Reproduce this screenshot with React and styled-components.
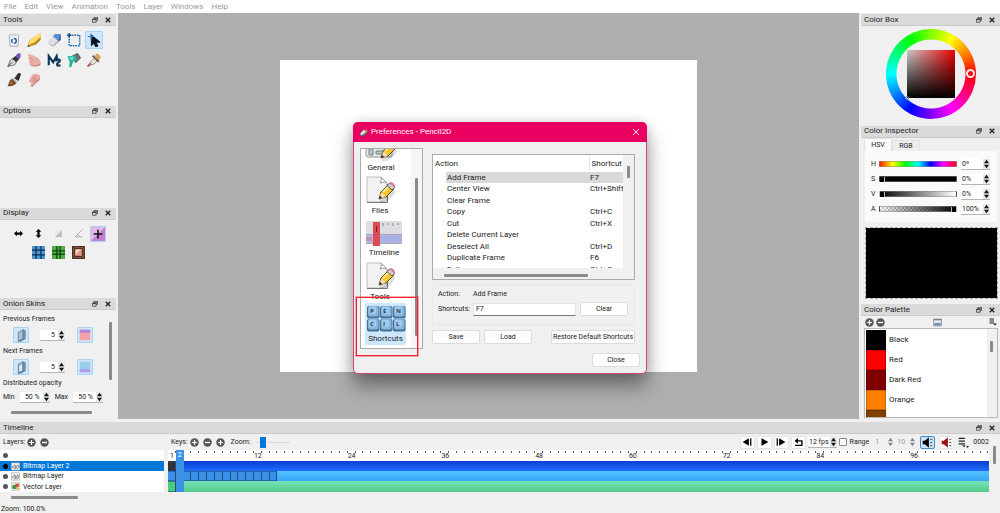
import React, { useState } from "react";
import styled, { createGlobalStyle, css } from "styled-components";

const GlobalStyle = createGlobalStyle`
  * { box-sizing: border-box; }
  body {
    margin: 0;
    background: #f0f0f0;
    color: #222;
    font: 7px/10px Roboto, "Noto Sans", sans-serif;
  }
  button, input {
    font: inherit;
    color: inherit;
    margin: 0;
    padding: 0;
    border: 0;
    background: none;
    min-width: 0;
  }
  svg { display: block; flex: none; }
  ul { list-style: none; margin: 0; padding: 0; }
`;

/* ---------- window ---------- */

const Window = styled.div`
  display: grid;
  grid-template-rows: 13px 1fr auto auto;
  min-height: 100vh;
`;

const MenuBar = styled.nav`
  display: flex;
  align-items: center;
  gap: 8px;
  padding: 0 4px;
  background: #fff;
  color: #999;
  font-size: 8px;
`;

const Main = styled.main`
  display: grid;
  grid-template-columns: 118px minmax(0, 1fr) 141px;
  padding-bottom: 3px;
`;

const Column = styled.div`
  display: grid;
  grid-template-rows: ${p => p.$rows};
  padding: ${p => (p.$right ? "1px 0 0 2px" : "1px 2px 0 0")};
`;

const Canvas = styled.div`
  display: flex;
  align-items: center;
  padding: 0 162px;
  background: #afafaf;
`;

const Sheet = styled.div`
  width: 100%;
  aspect-ratio: 4 / 3;
  background: #fff;
`;

const Status = styled.footer`
  padding-left: 1px;
  height: 9px;
  line-height: 10px;
`;

/* ---------- docks ---------- */

const DockBox = styled.section`
  display: flex;
  flex-direction: column;
  min-height: 0;
  min-width: 0;
`;

const DockHead = styled.header`
  display: flex;
  align-items: center;
  flex: none;
  height: 12px;
  padding: 0 4px 0 3px;
  background: #dadada;
  border-bottom: 1px solid #cbcbcb;
`;

const DockTitle = styled.h2`
  flex: 1;
  margin: 0;
  font-size: 8px;
  font-weight: 400;
  line-height: 12px;
`;

const DockButton = styled.button`
  display: grid;
  place-items: center;
  width: 8px;
  height: 8px;
  margin-left: 5px;
`;

const IconGrid = styled.div`
  display: grid;
  grid-template-columns: repeat(5, 18px);
  grid-auto-rows: 18px;
  gap: 2px;
  padding: 5px 0 0 5px;
`;

const DisplayRow = styled.div`
  display: flex;
  justify-content: center;
  gap: 4px;
  padding-top: ${p => (p.$first ? "6px" : "3px")};
`;

const IconButton = styled.button`
  display: grid;
  place-items: center;
  width: ${p => p.$size || 18}px;
  height: ${p => p.$size || 18}px;
  border-radius: 1px;
  ${p =>
    p.$on &&
    css`
      background: #cce6fb;
      border: 1px solid #a9d3f5;
    `}
`;

const Bar = styled.div`
  flex: none;
  background: #8a8a8a;
  border-radius: 1px;
  width: ${p => p.$w || 3}px;
  height: ${p => p.$h || 3}px;
  margin: ${p => p.$m || 0};
`;

const OnionBody = styled.div`
  display: grid;
  grid-template-columns: 1fr 6px;
`;

const OnionForm = styled.div`
  padding: 4px 0 0 3px;
`;

const OnionLine = styled.div`
  display: flex;
  align-items: center;
  height: 22px;
  padding-left: 10px;
`;

const OnionSpin = styled.div`
  margin: 0 12px 0 11px;
`;

const OpacityLine = styled.div`
  display: flex;
  align-items: center;
  justify-content: space-between;
  height: 18px;
  padding-right: 7px;
`;

const SpinBox = styled.span`
  display: inline-flex;
  align-items: center;
  width: ${p => p.$w}px;
  height: 11px;
  background: ${p => (p.$flat ? "transparent" : "#fff")};
  border-bottom: 1px solid ${p => (p.$flat ? "transparent" : "#b5b5b5")};
  color: ${p => (p.$flat ? "#999" : "#222")};
  input {
    flex: 1;
    width: 0;
    height: 10px;
    padding: 0 ${p => p.$pad || 1}px;
    text-align: ${p => p.$align || "right"};
  }
`;

const Steppers = styled.span`
  display: grid;
  width: 7px;
  height: 10px;
  background: ${p => (p.$flat ? "transparent" : "#e6e6e6")};
  button {
    display: grid;
    place-items: center;
    width: 7px;
    height: 5px;
  }
`;

/* ---------- color docks ---------- */

const Wheel = styled.div`
  display: grid;
  place-items: center;
  position: relative;
  width: 90px;
  height: 90px;
  margin: 3px auto 0;
  border-radius: 50%;
  background: radial-gradient(circle, #f0f0f0 34px, transparent 35px),
    conic-gradient(from 90deg, #f00, #f0f, #00f, #0ff, #0f0, #ff0, #f00);
`;

const Shade = styled.div`
  width: 48px;
  height: 48px;
  background: linear-gradient(to top, #000, transparent),
    linear-gradient(to right, #ccc, #e00);
`;

const HueMark = styled.i`
  position: absolute;
  right: 1px;
  top: 40px;
  width: 9px;
  height: 9px;
  border: 2px solid #ffe8ee;
  border-radius: 50%;
`;

const ShadeMark = styled.i`
  position: absolute;
  left: 19px;
  top: 67px;
  width: 4px;
  height: 4px;
  border: 1px solid #789;
  border-radius: 50%;
`;

const Tabs = styled.div`
  display: flex;
  align-items: flex-end;
  height: 13px;
  padding-left: 3px;
`;

const Tab = styled.button`
  width: 28px;
  height: ${p => (p.$on ? 13 : 11)}px;
  background: ${p => (p.$on ? "#fafafa" : "#eee")};
  border: 1px solid #e2e2e2;
  border-bottom: 0;
`;

const TabPage = styled.div`
  display: grid;
  align-content: start;
  gap: 4px;
  margin: 0 3px 0 4px;
  padding: 8px 7px 0 6px;
  height: 71px;
  background: #fafafa;
`;

const Channel = styled.div`
  display: grid;
  grid-template-columns: 8px minmax(0, 1fr) 29px;
  align-items: center;
  height: 11px;
`;

const ChannelSlider = styled.input`
  appearance: none;
  width: calc(100% - 4px);
  height: 6px;
  border: 1px solid #8888;
  border-radius: 1px;
  background: ${p => p.$bg};
  &::-webkit-slider-thumb {
    appearance: none;
    width: 5px;
    height: 5px;
    background: ${p => (p.$bare ? "transparent" : "#000")};
    border: solid ${p => (p.$bare ? "transparent" : "#bbb")};
    border-width: ${p => (p.$end ? "0 0 0 1px" : "0 1px 0 0")};
  }
`;

const Preview = styled.div`
  height: 72px;
  margin: 5px 2px 0 4px;
  background: #000 padding-box;
  border: 1px dashed #aaa;
`;

const PaletteBar = styled.div`
  display: flex;
  align-items: center;
  justify-content: space-between;
  height: 12px;
  padding: 0 3px 0 4px;
`;

const Pair = styled.span`
  display: flex;
  gap: 2px;
`;

const PaletteList = styled.div`
  display: grid;
  grid-template-columns: 1fr 10px;
  height: 90px;
  margin: 0 2px 0 3px;
  overflow: hidden;
  background: #fff;
  border: 1px solid #b9b9b9;
  ul { padding: 1px; }
`;

const Swatch = styled.button`
  display: flex;
  align-items: center;
  gap: 3px;
  height: 20px;
  font-size: 8px;
  &::before {
    content: "";
    width: 18px;
    height: 18px;
    background: ${p => p.$color};
    border: 1px solid #0003;
  }
`;

const PaletteGutter = styled.div`
  background: #f0f0f0;
`;

/* ---------- timeline ---------- */

const TimelineBody = styled.div`
  display: grid;
  grid-template-columns: 168px minmax(0, 1fr) 11px;
  height: 70px;
`;

const ToolRow = styled.div`
  display: flex;
  align-items: center;
  height: 16px;
  padding-left: 3px;
  gap: 4px;
`;

const ToolGroup = styled.div`
  display: flex;
  align-items: center;
  gap: ${p => p.$gap || 2}px;
`;

const Spacer = styled.span`
  flex: 1;
`;

const ZoomLabel = styled.label`
  margin-left: 2px;
`;

const ZoomSlider = styled.input`
  appearance: none;
  width: 33px;
  height: 12px;
  margin-left: 2px;
  background: linear-gradient(#d8d8d8, #d8d8d8) center / 100% 1px no-repeat;
  &::-webkit-slider-thumb {
    appearance: none;
    width: 6px;
    height: 11px;
    background: #0078d7;
  }
`;

const PlayButton = styled.button`
  display: grid;
  place-items: center;
  width: 15px;
  height: 13px;
  background: ${p => (p.$on ? "#cce4f7" : "#fdfdfd")};
  border: 1px solid ${p => (p.$on ? "#3c8ac9" : "#e4e4e4")};
  border-radius: 2px;
`;

const RangeLabel = styled.label`
  display: flex;
  align-items: center;
  gap: 3px;
  margin-right: 1px;
  input {
    appearance: none;
    width: 8px;
    height: 8px;
    background: #fafafa;
    border: 1px solid #888;
    border-radius: 1px;
  }
`;

const LayerList = styled.ul`
  width: 164px;
  background: #fff;
`;

const Layer = styled.li`
  display: flex;
  align-items: center;
  gap: 3px;
  height: ${p => (p.$tall ? 11 : 10)}px;
  padding-left: 3px;
  background: ${p => (p.$on ? "#0078d7" : "#fff")};
  color: ${p => (p.$on ? "#fff" : "#222")};
`;

const Eye = styled.button`
  width: 5px;
  height: 5px;
  border-radius: 50%;
  background: ${p => (p.$on ? "#000" : "#555")};
`;

const Frames = styled.div`
  position: relative;
  background: #fff;
`;

const Ruler = styled.div`
  display: flex;
  height: 11px;
  padding-top: 1px;
`;

const Tick = styled.span`
  display: flex;
  justify-content: ${p => (p.$edge ? "center" : "flex-end")};
  flex: 1 1 0;
  width: 0;
  line-height: 10px;
  background: linear-gradient(#555, #555) right top / 1px 2px no-repeat;
`;

const Track = styled.div`
  display: flex;
  height: ${p => (p.$tall ? 11 : 10)}px;
  background: linear-gradient(${p => p.$from}, ${p => p.$to});
`;

const Key = styled.i`
  flex: 1 1 0;
  ${p =>
    p.$fill &&
    css`
      background: ${p.$fill};
      box-shadow: inset -1px 0 #1d4f80, inset 0 1px #1d4f8099, inset 0 -1px #1d4f8099;
    `}
`;

const Playhead = styled.div`
  position: absolute;
  left: calc(100% / 105);
  top: 0;
  width: calc(100% / 105);
  height: 42px;
  background: #3f92e3;
  color: #fff;
  line-height: 11px;
  text-align: center;
`;

/* ---------- preferences dialog ---------- */

const Overlay = styled.div`
  position: absolute;
  inset: 0;
  display: grid;
  place-items: center;
  padding-bottom: 17px;
  pointer-events: none;
`;

const Dialog = styled.div`
  position: relative;
  width: 294px;
  background: #f0f0f0;
  border: 1px solid #d0437f;
  border-radius: 5px;
  box-shadow: 0 12px 20px #0006, 0 0 12px #0002;
  pointer-events: auto;
`;

const TitleBar = styled.header`
  display: flex;
  align-items: center;
  gap: 3px;
  height: 20px;
  margin: -1px -1px 0;
  padding: 0 7px 0 6px;
  background: #ea0061;
  border-radius: 5px 5px 0 0;
  color: #fff;
  font-size: 8px;
`;

const DialogBody = styled.div`
  display: grid;
  grid-template-columns: 63px minmax(0, 1fr);
  gap: 9px;
  padding: 6px 11px 0 6px;
`;

const Pages = styled.div`
  display: flex;
  height: 201px;
  overflow: hidden;
  background: #fff;
  border: 1px solid #aaa;
  ul { width: 50px; }
`;

const Page = styled.li`
  button {
    display: grid;
    justify-items: center;
    justify-content: center;
    align-content: end;
    width: ${p => p.$w}px;
    height: ${p => p.$h}px;
    margin-left: 4px;
    font-size: 8px;
    line-height: 12px;
    background: ${p => (p.$on ? "#cce8ff" : "none")};
  }
`;

const Gutter = styled.div`
  flex: 1;
  background: #f5f5f5;
  padding: 29px 0 0 4px;
`;

const Highlight = styled.div`
  position: absolute;
  left: 2px;
  top: 174px;
  width: 62px;
  height: 59px;
  border: 1px solid #f0222c;
  outline: 1px solid #f0222c60;
`;

const Panel = styled.div`
  padding-top: 6px;
`;

const TreeBox = styled.div`
  display: grid;
  grid-template-columns: minmax(0, 1fr) 11px;
  height: 126px;
  border: 1px solid #aaa;
`;

const TreeClip = styled.div`
  height: 113px;
  overflow: hidden;
  background: #fff;
`;

const Tree = styled.table`
  table-layout: fixed;
  width: 100%;
  border-collapse: collapse;
  font-size: 8px;
  line-height: 11px;
  th, td {
    padding: 0;
    font-weight: 400;
    text-align: left;
    white-space: nowrap;
    overflow: hidden;
  }
  th { height: 16px; padding: 1px 0 0 2px; }
  th:last-child { width: 34px; border-left: 1px solid #e5e5e5; }
  td { height: 11px; }
  tr:nth-child(odd) td { height: 12px; }
  td:first-child { padding-left: 13px; }
`;

const Cell = styled.span`
  display: block;
  padding-left: 1px;
  background: ${p => (p.$on ? "#d9d9d9" : "none")};
`;

const Group = styled.div`
  display: grid;
  grid-template-columns: 35px 1fr 48px;
  grid-template-rows: 12px 14px;
  row-gap: 2px;
  align-items: center;
  height: 41px;
  margin-top: 4px;
  padding: 3px 6px 0 5px;
  border: 1px solid #e8e8e8;
`;

const ShortcutInput = styled.input`
  width: 103px;
  height: 13px;
  padding: 0 2px;
  background: #fff;
  border: 1px solid #e4e4e4;
  border-bottom-color: #777;
`;

const PushButton = styled.button`
  width: ${p => p.$w || 48}px;
  height: 14px;
  background: #fdfdfd;
  border: 1px solid #dcdcdc;
  border-radius: 2px;
  white-space: nowrap;
`;

const Buttons = styled.div`
  display: flex;
  gap: 4px;
  padding-top: 5px;
  button:last-child { margin-left: auto; }
`;

const DialogFoot = styled.footer`
  display: flex;
  justify-content: flex-end;
  padding: 4px 6px 6px;
`;

/* ---------- drawings ---------- */

const Svg = ({ s = 14, v = 16, children }) => (
  <svg width={s} height={s} viewBox={`0 0 ${v} ${v}`} fill="none" aria-hidden="true">
    {children}
  </svg>
);

const toolIcons = [
  ["Clear Frame", <>
    <path d="M2.500 2h11l-1 13h-9z" fill="#f1f4f8" stroke="#9aa2ac" />
    <path d="M2 1.500h12v2H2z" fill="#d3d9e0" />
    <circle cx="8" cy="9" r="2.600" stroke="#3a62a6" strokeWidth="1.800" strokeDasharray="4 1.400" />
  </>],
  ["Pencil", <>
    <path d="M15.500 0v8L10 13l-9 3-.5-1.500L3 8z" fill="#e9b233" />
    <path d="M15.500 0L4 8l-2 5 7-3 6.500-6z" fill="#ffdc6b" />
    <path d="M15.500 5v3L10 13l-7 2.500 1-2L9 11z" fill="#b9811f" />
    <path d="M.5 16l1-2.500 2 1.500z" fill="#4a3414" />
  </>],
  ["Eraser", <>
    <path d="M1 11L9 1h6.500v7L8 15H5z" fill="#a9aeb6" />
    <path d="M1 11l6-7.500 6 4.500-6.500 6.500z" fill="#dcdee2" />
    <path d="M9 1h6.500v6L13 9 7 4z" fill="#5b8fd6" />
    <path d="M15.500 1v7L13 10V8z" fill="#345f9f" />
  </>],
  ["Select", <>
    <rect x="2.500" y="2.500" width="12" height="12" stroke="#2470ae" strokeWidth="1.700" strokeDasharray="2 1" />
    <path d="M0 2.500h5M2.500 0v5" stroke="#174f82" strokeWidth="1.700" />
  </>],
  ["Move", <>
    <path d="M5 2v12.500l3-2.800 2 4.300 2.500-1-2-4.500H15z" fill="#08121f" stroke="#08121f" />
    <path d="M1 4h7M4.500 .5v7" stroke="#3b86c7" strokeWidth="1.400" />
  </>],
  ["Pen", <>
    <path d="M1 15.500l2.500-7L7 6l4 4-2 3.500z" fill="#d5d8dd" stroke="#666b74" />
    <path d="M1 15.500l5-5" stroke="#333" />
    <path d="M6 6.500L10 3l4 4-3.500 3.500z" fill="#33343a" />
    <path d="M10 3.500L12 .5h3.500V5L13 7z" fill="#7450b4" />
  </>],
  ["Hand", <>
    <path d="M.5 1.500C4 1 9 3.500 13 6c3 2.500 3 5 2 8-4 2-9 2-12-1l-1-3 1.500-1L1 6l2-.5z" fill="#e8ada4" />
    <path d="M2 5l5 3M3 9l4 2" stroke="#d0968e" />
    <path d="M3 13c3 3 8 3 12 1l.5-3c-3 3-8 4-12.500 2z" fill="#cf8f86" />
  </>],
  ["Polyline", <path d="M2 14V3.500l5 7 4-7 .5 4M9.500 9c3-2 6-2 5 .5-1 1.500-3 1.500-3 3.500s2 1.500 4 1" stroke="#0d3554" strokeWidth="2.400" />],
  ["Paint Bucket", <>
    <path d="M6 3.500L12 .5l3.500 5L10 11z" fill="#6d7277" stroke="#44484c" />
    <path d="M.5 4l9-1.500 1.500 6-4 1.500L5 16H2.500L3 10z" fill="#1cb59e" />
    <path d="M2 5l6-1-2 5z" fill="#6fe0cd" />
  </>],
  ["Eyedropper", <>
    <path d="M1.500 14.500L4 10l5-5 3.500 3.500-5 4.500z" fill="#e8dcd7" stroke="#a08c86" />
    <path d="M.5 15.500l4-3.500" stroke="#c05a5a" strokeWidth="2.200" />
    <path d="M6.500 3l7 7" stroke="#6d5442" strokeWidth="2.200" />
    <path d="M9 5l1-4 2.500-.5 3.500 4L13.500 8z" fill="#dba468" />
  </>],
  ["Brush", <>
    <path d="M9 6l4-5.500L15.500 1 13 8.500z" fill="#2a2a2a" stroke="#2a2a2a" />
    <path d="M7 5l5.500 5-2 2L5 7z" fill="#c2c2c2" />
    <path d="M5.500 6.500l5 5C9 15 4 15 .5 15.500 2.500 13 1.500 9 5.500 6.500z" fill="#7a4522" />
    <path d="M5 9l2 3-4 1.500" fill="#b67a42" />
  </>],
  ["Smudge", <>
    <path d="M6 2c4-2 8-1 9 2 1 4-3 6-5.500 8L6 16l-2.500-1L5 11l-3-1 1-3z" fill="#e8aba3" />
    <path d="M6 6.500l4-2.500M6 9l5-3M8 10.500l4-3" stroke="#c47f78" />
    <path d="M15 5c0 4-3 5-5.500 7L6 16l-1-.5 4-5z" fill="#cf8d85" />
  </>],
];

const displayIcons = [
  ["Mirror horizontally", <path d="M0 8l5-5v3h6V3l5 5-5 5v-3H5v3z" fill="#000" />],
  ["Mirror vertically", <path d="M8 0l5 5h-3v6h3l-5 5-5-5h3V5H3z" fill="#000" />],
  ["Thin lines", <><path d="M2 14V2h12z" fill="#e6e6e6" /><path d="M2 14L14 2v12z" fill="#bdbdbd" /></>],
  ["Outlines", <path d="M15 1L2 14h13M5 8l6 6" stroke="#a0a0a0" strokeWidth="1.500" />],
  ["Center", <><path d="M0 0h16L0 16z" fill="#e5b6e9" /><path d="M16 0v16H0z" fill="#c77dd0" /><path d="M3 8h10M8 3v10" stroke="#111" strokeWidth="1.800" /></>],
  ["Thirds", <><path d="M0 0h16v16H0z" fill="#4d98cf" /><path d="M0 5h16M0 11h16M5 0v16M11 0v16" stroke="#0b2c57" strokeWidth="1.500" /></>],
  ["Golden ratio", <><path d="M0 0h16v16H0z" fill="#4faf43" /><path d="M0 6h16M0 10h16M6 0v16M10 0v16" stroke="#0c4212" strokeWidth="1.500" /></>],
  ["Safe areas", <><path d="M0 0h16v16H0z" fill="#9a6650" /><path d="M1 1h14v14H1zM3.500 3.500h9v9h-9z" stroke="#3a1c12" strokeWidth="1.300" /><path d="M4 4h8L4 12z" fill="#f6d2bf" /><path d="M12 4v8H4z" fill="#e09a7c" /></>],
];

const Plus = () => <Svg s={9}><circle cx="8" cy="8" r="7.500" fill="#555" /><path d="M3.500 8h9M8 3.500v9" stroke="#fff" strokeWidth="2.200" /></Svg>;
const Minus = () => <Svg s={9}><circle cx="8" cy="8" r="7.500" fill="#555" /><path d="M3.500 8h9" stroke="#fff" strokeWidth="2.500" /></Svg>;

const FloatIcon = () => <Svg s={6} v={8}><path d="M2.500 3V1h5v3.500H6M.5 3h5v4h-5z" stroke="#333" /><path d="M0 3.500h6M2 1.500h6" stroke="#333" /></Svg>;
const CloseIcon = ({ color = "#222", w = 1.8, s = 6 }) => <Svg s={s} v={8}><path d="M1 1l6 6M7 1L1 7" stroke={color} strokeWidth={w} /></Svg>;

const Cube = ({ flip }) => (
  <Svg s={13}>
    <path d="M4 4l6-3v11l-6 3z" fill="#a9bfd1" stroke="#5d7a92" />
    <path d="M10 1l2.500 1v10L7 15l-3 0 6-3z" fill="#7892a8" stroke="#5d7a92" />
    {flip && <path d="M5.500 6L8.500 4.500v7l-3 1.500z" fill="#e4eef6" />}
  </Svg>
);

// fat little pencil lying over the page icons
const PencilOverlay = () => (
  <>
    <path d="M15 26c5 1 12-5 14-10" stroke="#0002" strokeWidth="3" />
    <path d="M14 24l2-7 8-8 5 5-8 8z" fill="#f5c52f" stroke="#5c451a" />
    <path d="M18 17l7-7" stroke="#ffe994" strokeWidth="2" />
    <path d="M22 10.500l2.500-2.500c3 0 5 2 5 5L27 15z" fill="#c9ccd2" stroke="#6b5c56" />
    <path d="M24.500 8c1-1.500 6-.5 5 4.500z" fill="#dc7886" />
    <path d="M14 24l2-6c2 0 4 2 4.500 4z" fill="#f3d9ae" />
    <path d="M14 24l1-3 2 2z" fill="#111" />
  </>
);

const PaperIcon = () => (
  <Svg s={30} v={30}>
    <path d="M2 2h14l6 6v19H2z" fill="#f2f2f2" stroke="#bdbdbd" />
    <path d="M16 2c1 2 0 4-1 6 3-1 5-1 7 0z" fill="#fff" stroke="#999" />
    <path d="M2 27.500h20.500V9" stroke="#777" />
    <PencilOverlay />
  </Svg>
);

const GeneralIcon = () => (
  <Svg s={32} v={32}>
    <rect x="1" y="14" width="26" height="13" rx="2" fill="#e8eae9" stroke="#8f9694" />
    <path d="M4 19h4v6H4zM11 21h8v3h-8z" fill="#b9c9c4" stroke="#74827e" />
    <g transform="translate(2 4)"><PencilOverlay /></g>
  </Svg>
);

const TimelineIcon = () => (
  <svg width="36" height="26" viewBox="0 0 36 26" fill="none" aria-hidden="true">
    <path d="M0 0h36v13H0z" fill="#dedee2" />
    <path d="M0 13h36v10H0z" fill="#b9b4df" />
    <path d="M0 13.500h36M0 22.500h36" stroke="#a5a5b8" />
    <path d="M17 2v3M22 2v2M27 2v3M32 2v2" stroke="#888" />
    <path d="M0 16h6v4H0z" fill="#c98fb4" />
    <path d="M7 1h7v24H7z" fill="#d94b55" />
    <path d="M10.500 5v6" stroke="#7c1820" />
    <path d="M14 15h22v6H14z" fill="#a9b0e6" />
  </svg>
);

const KeyLabel = styled.text`
  font: 700 6px "Open Sans", sans-serif;
  fill: #173c5f;
`;

const KeysIcon = () => (
  <svg width="40" height="27" viewBox="0 0 40 27" aria-hidden="true">
    {["P", "E", "N", "C", "I", "L"].map((k, i) => (
      <g key={k} transform={`translate(${(i % 3) * 13 + 1} ${i < 3 ? 0 : 13})`}>
        <rect width="12.500" height="12.500" rx="2" fill="#466f96" />
        <rect x="1" width="10.500" height="10.500" rx="2" fill="#86b7de" />
        <rect x="2" y="1" width="7" height="7" rx="1" fill="#a3cbe9" />
        <KeyLabel x="3" y="7">{k}</KeyLabel>
      </g>
    ))}
  </svg>
);

const LayerIcon = ({ vector }) => (
  <Svg s={9}>
    <path d="M.5 1.500h15v13H.5z" fill="#f4f4f4" stroke="#999" />
    {vector ? (
      <><circle cx="6" cy="9" r="4" fill="#3c9a3b" /><path d="M8 3h6v6H8z" fill="#d34b2f" /><path d="M9 9l4 4" stroke="#e0b52d" strokeWidth="3" /></>
    ) : (
      <path d="M3 11c0-5 4-7 5-4s-4 4-1 5 3-8 6-6-1 6-3 6" stroke="#555" strokeWidth="1.500" />
    )}
  </Svg>
);

const Speaker = ({ color }) => (
  <Svg s={11}>
    <path d="M1 5.500h3l6-5v15l-6-5H1z" fill={color} />
    <path d="M12 4l3-1M12 8h3M12 12l3 1" stroke="#333" strokeWidth="1.300" />
  </Svg>
);

/* ---------- components ---------- */

function Dock({ title, children }) {
  return (
    <DockBox aria-label={title}>
      <DockHead>
        <DockTitle>{title}</DockTitle>
        <DockButton aria-label={"Float " + title}><FloatIcon /></DockButton>
        <DockButton aria-label={"Close " + title}><CloseIcon /></DockButton>
      </DockHead>
      {children}
    </DockBox>
  );
}

function Spin({ label, value, w, align, pad, flat }) {
  const [text, setText] = useState(value);
  const fill = flat ? "#888" : "#111";

  const step = by => {
    setText(String(text).replace(/\d+/, n => Number(n) + by));
  };

  return (
    <SpinBox $w={w} $align={align} $pad={pad} $flat={flat}>
      <input aria-label={label} value={text} onChange={e => setText(e.target.value)} />
      <Steppers $flat={flat}>
        <button aria-label={label + " up"} onClick={() => step(1)}>
          <Svg s={5} v={6}><path d="M0 5l3-4 3 4z" fill={fill} /></Svg>
        </button>
        <button aria-label={label + " down"} onClick={() => step(-1)}>
          <Svg s={5} v={6}><path d="M0 1l3 4 3-4z" fill={fill} /></Svg>
        </button>
      </Steppers>
    </SpinBox>
  );
}

function LeftDocks() {
  const [tool, setTool] = useState("Move");

  return (
    <Column $rows="92fr 102fr 91fr 121fr">
      <Dock title="Tools">
        <IconGrid>
          {toolIcons.map(([name, art]) => (
            <IconButton key={name} aria-label={name} $on={tool === name} onClick={() => setTool(name)}>
              <Svg>{art}</Svg>
            </IconButton>
          ))}
        </IconGrid>
      </Dock>
      <Dock title="Options" />
      <Dock title="Display">
        <DisplayRow $first>
          {displayIcons.slice(0, 5).map(([name, art]) => (
            <IconButton key={name} aria-label={name} $size={16} $on={name === "Center"}>
              <Svg s={name === "Center" ? 14 : 9}>{art}</Svg>
            </IconButton>
          ))}
        </DisplayRow>
        <DisplayRow>
          {displayIcons.slice(5).map(([name, art]) => (
            <IconButton key={name} aria-label={name} $size={16}>
              <Svg s={13}>{art}</Svg>
            </IconButton>
          ))}
        </DisplayRow>
      </Dock>
      <Dock title="Onion Skins">
        <OnionBody>
          <OnionForm>
            <div>Previous Frames</div>
            <OnionLine>
              <IconButton $size={16} $on aria-label="Show previous"><Cube /></IconButton>
              <OnionSpin><Spin label="Previous frames" value="5" w={25} pad={3} /></OnionSpin>
              <IconButton $size={16} $on aria-label="Previous color">
                <Svg s={12}><path d="M1 1h14v14H1z" fill="#f5a3a9" /><path d="M1 1h14v4H1z" fill="#b285dd" /></Svg>
              </IconButton>
            </OnionLine>
            <div>Next Frames</div>
            <OnionLine>
              <IconButton $size={16} $on aria-label="Show next"><Cube flip /></IconButton>
              <OnionSpin><Spin label="Next frames" value="5" w={25} pad={3} /></OnionSpin>
              <IconButton $size={16} $on aria-label="Next color">
                <Svg s={12}><path d="M1 1h14v14H1z" fill="#9bcdea" /><path d="M1 11h14v4H1z" fill="#b39af0" /></Svg>
              </IconButton>
            </OnionLine>
            <div>Distributed opacity</div>
            <OpacityLine>
              Min <Spin label="Min" value="50 %" w={30} pad={3} />
              Max <Spin label="Max" value="50 %" w={30} pad={3} />
            </OpacityLine>
          </OnionForm>
          <Bar $h={58} $m="12px 0 0 -1px" />
        </OnionBody>
        <Bar $w={81} $m="5px 0 0 11px" />
      </Dock>
    </Column>
  );
}

const channels = [
  ["H", "0º", 0, "linear-gradient(90deg,#f20,#ff0,#0f0,#0ff,#00f,#f0f,#f02)"],
  ["S", "0%", 0, "#000"],
  ["V", "0%", 0, "linear-gradient(90deg,#000,#fff)"],
  ["A", "100%", 100, "linear-gradient(90deg,transparent,#000), repeating-conic-gradient(#ccc 0 25%,#fff 0 50%) 0 0 / 4px 4px"],
];

const palette = [
  ["Black", "#000"],
  ["Red", "#f00"],
  ["Dark Red", "#800000"],
  ["Orange", "#ff8000"],
  ["Dark Orange", "#804000"],
];

function RightDocks() {
  return (
    <Column $right $rows="112fr 179fr 115fr">
      <Dock title="Color Box">
        <Wheel>
          <Shade />
          <HueMark />
          <ShadeMark />
        </Wheel>
      </Dock>
      <Dock title="Color Inspector">
        <Tabs role="tablist">
          <Tab role="tab" aria-selected="true" $on>HSV</Tab>
          <Tab role="tab" aria-selected="false">RGB</Tab>
        </Tabs>
        <TabPage>
          {channels.map(([name, value, pos, bg]) => (
            <Channel key={name}>
              <span>{name}</span>
              <ChannelSlider
                type="range"
                aria-label={name}
                defaultValue={pos}
                $bg={bg}
                $bare={name === "H"}
                $end={pos === 100}
              />
              <Spin label={name + " value"} value={value} w={29} align="left" />
            </Channel>
          ))}
        </TabPage>
        <Preview />
      </Dock>
      <Dock title="Color Palette">
        <PaletteBar>
          <Pair>
            <button aria-label="Add color"><Plus /></button>
            <button aria-label="Remove color"><Minus /></button>
          </Pair>
          <button aria-label="Native color dialog">
            <Svg s={9}><path d="M1 2h14v12H1z" fill="#dfe8f0" stroke="#666" /><path d="M2 9h12v4H2z" fill="#6c91b5" /><path d="M1 3h14" stroke="#777" strokeWidth="2" /></Svg>
          </button>
          <button aria-label="Palette menu">
            <Svg s={8}><path d="M1 2h9M1 6h9M1 10h9" stroke="#222" strokeWidth="2" /><path d="M8 11h8l-4 4z" fill="#222" /></Svg>
          </button>
        </PaletteBar>
        <PaletteList>
          <ul>
            {palette.map(([name, color]) => (
              <li key={name}><Swatch $color={color}>{name}</Swatch></li>
            ))}
          </ul>
          <PaletteGutter><Bar $h={11} $m="12px 0 0 3px" /></PaletteGutter>
        </PaletteList>
      </Dock>
    </Column>
  );
}

const FRAMES = Array.from({ length: 105 }, (_, i) => i + 1);

const tracks = [
  { from: "#0b3fd0", to: "#1e6cff", fill: "#333", keys: n => n === 1 },
  { from: "#53c4ff", to: "#38a4f4", fill: "#3a91e8", keys: n => n < 15 },
  { from: "#74e4b8", to: "#54cb88", fill: "#4ccb7d", keys: n => n === 1, tall: true },
];

function Timeline() {
  const [layer, setLayer] = useState("Bitmap Layer 2");

  return (
    <Dock title="Timeline">
      <TimelineBody>
        <div>
          <ToolRow>
            <ToolGroup>
              Layers:
              <ToolGroup $gap={4}>
                <button aria-label="Add layer"><Plus /></button>
                <button aria-label="Remove layer"><Minus /></button>
              </ToolGroup>
            </ToolGroup>
          </ToolRow>
          <LayerList>
            <Layer $tall><Eye aria-label="Toggle all layers" /></Layer>
            {["Bitmap Layer 2", "Bitmap Layer", "Vector Layer"].map((name, i) => (
              <Layer key={name} $on={name === layer} $tall={i === 2} onClick={() => setLayer(name)}>
                <Eye aria-label={"Toggle " + name} $on={name === layer} />
                <LayerIcon vector={i === 2} />
                <span>{name}</span>
              </Layer>
            ))}
          </LayerList>
          <Bar $w={67} $m="4px 0 0 11px" />
        </div>
        <div>
          <ToolRow>
            <ToolGroup>
              Keys:
              <ToolGroup $gap={4}>
                <button aria-label="Add frame"><Plus /></button>
                <button aria-label="Remove frame"><Minus /></button>
                <button aria-label="Duplicate frame"><Plus /></button>
              </ToolGroup>
            </ToolGroup>
            <ZoomLabel htmlFor="zoom">Zoom:</ZoomLabel>
            <ZoomSlider id="zoom" type="range" defaultValue={12} />
            <Spacer />
            <ToolGroup>
              <PlayButton aria-label="Previous frame"><Svg s={10}><path d="M11 2v12L1 8zM13 2h2v12h-2z" fill="#000" /></Svg></PlayButton>
              <PlayButton aria-label="Play"><Svg s={10}><path d="M4 2l11 6-11 6z" fill="#000" /></Svg></PlayButton>
              <PlayButton aria-label="Next frame"><Svg s={10}><path d="M5 2v12l10-6zM1 2h2v12H1z" fill="#000" /></Svg></PlayButton>
              <PlayButton aria-label="Loop"><Svg s={9}><path d="M2 13h12V5H5" stroke="#000" strokeWidth="2.400" /><path d="M7 0v10L1 5z" fill="#000" /></Svg></PlayButton>
              <Spin label="Frames per second" value="12 fps" w={29} />
              <RangeLabel><input type="checkbox" />Range</RangeLabel>
            </ToolGroup>
            <ToolGroup>
              <Spin label="Range start" value="1" w={20} align="left" flat />
              <Spin label="Range end" value="10" w={20} align="left" flat />
            </ToolGroup>
            <ToolGroup $gap={4}>
              <PlayButton $on aria-label="Sound"><Speaker color="#000" /></PlayButton>
              <PlayButton aria-label="Sound scrub"><Speaker color="#a01010" /></PlayButton>
            </ToolGroup>
            <button aria-label="Timeline options">
              <Svg s={11}><path d="M1 2h9M1 6h9M1 10h9" stroke="#222" strokeWidth="1.800" /><path d="M6 12h5l-2 3zM12 13h4l-2 3z" fill="#222" /></Svg>
            </button>
            <span>0002</span>
          </ToolRow>
          <Frames>
            <Ruler>
              {FRAMES.map(n => (
                <Tick key={n} $edge={n < 3}>{n === 1 || n % 12 === 0 ? n : ""}</Tick>
              ))}
            </Ruler>
            {tracks.map(t => (
              <Track key={t.from} $from={t.from} $to={t.to} $tall={t.tall}>
                {FRAMES.map(n => <Key key={n} $fill={t.keys(n) && t.fill} />)}
              </Track>
            ))}
            <Playhead>2</Playhead>
          </Frames>
        </div>
        <Bar $h={18} $m="12px 0 0 4px" />
      </TimelineBody>
    </Dock>
  );
}

const pages = [
  ["General", <GeneralIcon />, 25, 32],
  ["Files", <PaperIcon />, 43, 30],
  ["Timeline", <TimelineIcon />, 42, 38],
  ["Tools", <PaperIcon />, 44, 30],
  ["Shortcuts", <KeysIcon />, 42, 41],
];

const shortcuts = [
  ["Add Frame", "F7"],
  ["Center View", "Ctrl+Shift+H"],
  ["Clear Frame", ""],
  ["Copy", "Ctrl+C"],
  ["Cut", "Ctrl+X"],
  ["Delete Current Layer", ""],
  ["Deselect All", "Ctrl+D"],
  ["Duplicate Frame", "F6"],
  ["Exit", "Ctrl+Q"],
];

function Preferences() {
  const [keys, setKeys] = useState("F7");

  return (
    <Overlay>
      <Dialog role="dialog" aria-label="Preferences">
        <TitleBar>
          <Svg s={9}>
            <path d="M1 10L8 3l6 1 1 5-7 6-5-1z" fill="#5c6d86" />
            <path d="M2 10L9 3l3 3-7 7z" fill="#e7e9ec" />
            <path d="M8 13l7-8-2-3z" fill="#e8a23b" />
          </Svg>
          <span>Preferences - Pencil2D</span>
          <Spacer />
          <button aria-label="Close dialog"><CloseIcon color="#fff" w={0.9} s={8} /></button>
        </TitleBar>
        <DialogBody>
          <Pages>
            <ul>
              {pages.map(([name, art, h, w]) => (
                <Page key={name} $h={h} $w={w} $on={name === "Shortcuts"}>
                  <button>{art}{name}</button>
                </Page>
              ))}
            </ul>
            <Gutter><Bar $h={158} /></Gutter>
          </Pages>
          <Panel>
            <TreeBox>
              <TreeClip>
                <Tree>
                  <thead>
                    <tr><th>Action</th><th>Shortcut</th></tr>
                  </thead>
                  <tbody>
                    {shortcuts.map(([action, key], i) => (
                      <tr key={action}>
                        <td><Cell $on={i === 0}>{action}</Cell></td>
                        <td><Cell $on={i === 0}>{key}</Cell></td>
                      </tr>
                    ))}
                  </tbody>
                </Tree>
              </TreeClip>
              <Bar $h={12} $m="11px 0 0 4px" />
              <Bar $w={144} $m="4px 0 0 11px" />
            </TreeBox>
            <Group>
              <span>Action:</span>
              <span>Add Frame</span>
              <span />
              <label htmlFor="shortcut">Shortcuts:</label>
              <ShortcutInput id="shortcut" value={keys} onChange={e => setKeys(e.target.value)} />
              <PushButton onClick={() => setKeys("")}>Clear</PushButton>
            </Group>
            <Buttons>
              <PushButton>Save</PushButton>
              <PushButton>Load</PushButton>
              <PushButton $w={84}>Restore Default Shortcuts</PushButton>
            </Buttons>
          </Panel>
        </DialogBody>
        <DialogFoot><PushButton>Close</PushButton></DialogFoot>
        <Highlight />
      </Dialog>
    </Overlay>
  );
}

export default function App() {
  return (
    <>
      <GlobalStyle />
      <Window>
        <MenuBar>
          {["File", "Edit", "View", "Animation", "Tools", "Layer", "Windows", "Help"].map(m => (
            <button key={m}>{m}</button>
          ))}
        </MenuBar>
        <Main>
          <LeftDocks />
          <Canvas><Sheet /></Canvas>
          <RightDocks />
        </Main>
        <Timeline />
        <Status>Zoom: 100.0%</Status>
      </Window>
      <Preferences />
    </>
  );
}
